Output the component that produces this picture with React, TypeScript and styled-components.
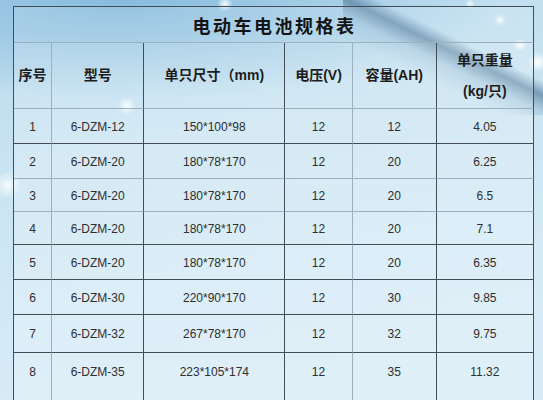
import React from 'react';
import styled, { createGlobalStyle } from 'styled-components';

const GlobalStyle = createGlobalStyle`
  html, body {
    margin: 0;
    padding: 0;
  }
  body {
    width: 543px;
    height: 400px;
    overflow: hidden;
  }
`;

const DARK = '#434d55';
const LIGHT = '#9cb0be';

const Page = styled.div`
  width: 543px;
  height: 400px;
  box-sizing: border-box;
  padding: 6px 9px 0 13px;
  overflow: hidden;
  background:
    radial-gradient(circle at 127px 106px, rgba(255, 255, 255, 0.9) 0, rgba(255, 255, 255, 0) 9px),
    radial-gradient(circle at 8px 185px, rgba(255, 255, 255, 0.8) 0, rgba(255, 255, 255, 0) 14px),
    radial-gradient(circle at 225px 4px, rgba(255, 255, 255, 0.9) 0, rgba(255, 255, 255, 0) 8px),
    radial-gradient(circle at 500px 20px, rgba(255, 255, 255, 0.9) 0, rgba(255, 255, 255, 0) 6px),
    radial-gradient(circle at 520px 45px, rgba(255, 255, 255, 0.9) 0, rgba(255, 255, 255, 0) 7px),
    radial-gradient(circle at 538px 62px, rgba(255, 255, 255, 1) 0, rgba(255, 255, 255, 0) 10px),
    radial-gradient(circle at 470px 4px, rgba(255, 255, 255, 0.8) 0, rgba(255, 255, 255, 0) 5px),
    linear-gradient(206deg, rgba(200, 228, 244, 0) 0%, rgba(200, 228, 244, 0) 38%, rgba(86, 126, 158, 0.7) 45%, rgba(140, 178, 204, 0.4) 53%, rgba(200, 228, 244, 0) 64%) right top / 200px 115px no-repeat,
    radial-gradient(ellipse 380px 100px at 120px 0px, rgba(130, 184, 220, 0.9) 0%, rgba(130, 184, 220, 0) 100%),
    linear-gradient(170deg, #b8daed 0%, #c9e4f2 35%, #d4eaf6 70%, #d8ecf7 100%);
`;

const Sheet = styled.table`
  width: 521px;
  border-collapse: separate;
  border-spacing: 0;
  table-layout: fixed;
  border-top: 1px solid ${DARK};
  border-left: 1.5px solid ${DARK};
  font-family: 'Liberation Sans', 'Noto Sans CJK SC', sans-serif;
  color: #2e2e2e;
`;

const TitleCell = styled.th`
  height: 35px;
  padding: 0 0 0 2px;
  border-right: 1px solid ${DARK};
  border-bottom: 1px solid ${LIGHT};
  background: rgba(255, 255, 255, 0.12);
  font-family: 'Noto Sans CJK SC', sans-serif;
  font-size: 18px;
  font-weight: 700;
  letter-spacing: 2.5px;
  color: #141414;
  text-align: center;
  vertical-align: middle;
`;

const HeadCell = styled.th<{ $strong: boolean }>`
  height: 65px;
  padding: 0;
  border-right: 1px solid ${(p) => (p.$strong ? DARK : LIGHT)};
  border-bottom: 1px solid ${LIGHT};
  background: rgba(255, 255, 255, 0.18);
  font-family: 'Liberation Sans', 'Noto Sans CJK SC', sans-serif;
  font-size: 14px;
  font-weight: 700;
  line-height: 31px;
  color: #1c1c1c;
  text-align: center;
  vertical-align: middle;
`;

const Row = styled.tr<{ $h: number }>`
  height: ${(p) => p.$h}px;
`;

const Cell = styled.td<{ $strong: boolean; $strongBottom: boolean; $open: boolean }>`
  padding: ${(p) => (p.$open ? '0 0 12px' : '1px 0 0')};
  border-right: 1px solid ${(p) => (p.$strong ? DARK : LIGHT)};
  border-bottom: ${(p) => (p.$open ? 'none' : `1px solid ${p.$strongBottom ? DARK : LIGHT}`)};
  background: rgba(255, 255, 255, 0.22);
  font-size: 12px;
  text-align: center;
  vertical-align: middle;
`;

const widths = [38, 92, 141, 67, 84, 97];
const strongCols = [false, true, true, false, true, true];

const heads = ['序号', '型号', '单只尺寸（mm)', '电压(V)', '容量(AH)'];

const rows = [
  { n: '1', model: '6-DZM-12', size: '150*100*98', v: '12', ah: '12', kg: '4.05', h: 35, strong: true },
  { n: '2', model: '6-DZM-20', size: '180*78*170', v: '12', ah: '20', kg: '6.25', h: 35, strong: false },
  { n: '3', model: '6-DZM-20', size: '180*78*170', v: '12', ah: '20', kg: '6.5', h: 33, strong: false },
  { n: '4', model: '6-DZM-20', size: '180*78*170', v: '12', ah: '20', kg: '7.1', h: 33, strong: true },
  { n: '5', model: '6-DZM-20', size: '180*78*170', v: '12', ah: '20', kg: '6.35', h: 35, strong: true },
  { n: '6', model: '6-DZM-30', size: '220*90*170', v: '12', ah: '30', kg: '9.85', h: 35, strong: true },
  { n: '7', model: '6-DZM-32', size: '267*78*170', v: '12', ah: '32', kg: '9.75', h: 38, strong: true },
  { n: '8', model: '6-DZM-35', size: '223*105*174', v: '12', ah: '35', kg: '11.32', h: 50, strong: false },
];

export default function App() {
  return (
    <Page>
      <GlobalStyle />
      <Sheet>
        <colgroup>
          {widths.map((w, i) => (
            <col key={i} style={{ width: w }} />
          ))}
        </colgroup>
        <thead>
          <tr>
            <TitleCell colSpan={6}>电动车电池规格表</TitleCell>
          </tr>
          <tr>
            {heads.map((h, i) => (
              <HeadCell key={h} $strong={strongCols[i]}>
                {h}
              </HeadCell>
            ))}
            <HeadCell $strong>
              单只重量
              <br />
              (kg/只)
            </HeadCell>
          </tr>
        </thead>
        <tbody>
          {rows.map((r, ri) => {
            const open = ri === rows.length - 1;
            const vals = [r.n, r.model, r.size, r.v, r.ah, r.kg];
            return (
              <Row key={r.n} $h={r.h}>
                {vals.map((v, i) => (
                  <Cell key={i} $strong={strongCols[i]} $strongBottom={r.strong} $open={open}>
                    {v}
                  </Cell>
                ))}
              </Row>
            );
          })}
        </tbody>
      </Sheet>
    </Page>
  );
}
